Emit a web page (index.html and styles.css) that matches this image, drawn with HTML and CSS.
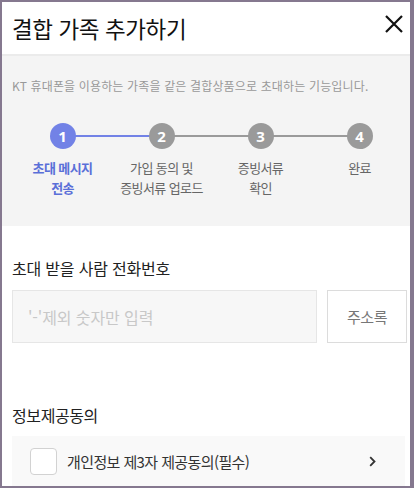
FILE: index.html
```html
<!DOCTYPE html>
<html lang="ko">
<head>
<meta charset="utf-8">
<link rel="stylesheet" href="styles.css">
</head>
<body>
<div class="frame">
  <header class="header">
    <h1 class="title">결합 가족 추가하기</h1>
    <button class="close" aria-label="닫기">
      <svg width="18" height="18" viewBox="0 0 18 18"><path d="M1 1L17 17M17 1L1 17" stroke="#111" stroke-width="2.2" fill="none"/></svg>
    </button>
  </header>
  <section class="intro">
    <p class="desc">KT 휴대폰을 이용하는 가족을 같은 결합상품으로 초대하는 기능입니다.</p>
    <ol class="steps">
      <li class="step active done"><span class="num">1</span><span class="label">초대 메시지<br>전송</span></li>
      <li class="step line"><span class="num">2</span><span class="label">가입 동의 및<br>증빙서류 업로드</span></li>
      <li class="step line"><span class="num">3</span><span class="label">증빙서류<br>확인</span></li>
      <li class="step"><span class="num">4</span><span class="label">완료</span></li>
    </ol>
  </section>
  <section class="form">
    <h2 class="field-label">초대 받을 사람 전화번호</h2>
    <div class="phone-row">
      <input class="phone-input" type="text" placeholder="'-'제외 숫자만 입력">
      <button class="book">주소록</button>
    </div>
    <h2 class="field-label agree-label">정보제공동의</h2>
    <div class="agree-row">
      <span class="check"></span>
      <span class="agree-text">개인정보 제3자 제공동의(필수)</span>
      <svg class="chev" width="7" height="11" viewBox="0 0 7 11"><path d="M1.2 1.2L5.5 5.5L1.2 9.8" stroke="#333" stroke-width="1.8" fill="none"/></svg>
    </div>
  </section>
</div>
</body>
</html>
```
FILE: styles.css
```css
* { box-sizing: border-box; margin: 0; padding: 0; }
html, body { width: 414px; height: 488px; background: #85788f; }
body {
  font-family: "Noto Sans CJK KR", "Noto Sans", sans-serif;
  color: #222;
}
.frame {
  width: 414px;
  height: 488px;
  border-style: solid;
  border-color: #85788f;
  border-width: 2px 4px 2px 2px;
  background: #fff;
  overflow: hidden;
}
.header {
  display: flex;
  align-items: center;
  justify-content: space-between;
  padding: 0 7px 0 10px;
  border-bottom: 2px solid #ebebeb;
  height: 54px;
}
.title {
  font-size: 22.5px;
  font-weight: 400;
  letter-spacing: -0.4px;
  color: #111;
  line-height: 30px;
  margin-top: -1px;
}
.close {
  border: 0;
  background: none;
  width: 18px;
  height: 18px;
  margin-top: -9px;
  display: flex;
}
.intro {
  background: #f4f4f4;
  height: 170px;
  padding: 21px 0 0 10px;
}
.desc {
  font-size: 12px;
  line-height: 18px;
  color: #999;
  letter-spacing: 0.15px;
}
.steps {
  list-style: none;
  display: grid;
  grid-template-columns: repeat(4, 99px);
  margin-top: 28px;
  margin-left: 1px;
}
.step {
  position: relative;
  display: flex;
  flex-direction: column;
  align-items: center;
}
.step.line::after,
.step.done::after {
  content: "";
  position: absolute;
  left: 50%;
  width: 99px;
  top: 12px;
  height: 2px;
  background: #9a9a9a;
  z-index: 0;
}
.step.done::after { background: #7282e6; }
.num {
  position: relative;
  z-index: 1;
  width: 26px;
  height: 26px;
  border-radius: 50%;
  background: #9a9a9a;
  color: #fff;
  font-family: "Noto Sans", sans-serif;
  font-weight: 700;
  font-size: 15px;
  line-height: 26px;
  text-align: center;
}
.step.active .num { background: #7282e6; }
.label {
  margin-top: 9px;
  font-size: 13px;
  line-height: 20px;
  letter-spacing: -0.6px;
  color: #666;
  text-align: center;
  white-space: nowrap;
}
.step.active .label { color: #5a6fd8; font-weight: 700; }
.form {
  padding: 31px 3px 0 10px;
}
.field-label {
  font-size: 16px;
  font-weight: 400;
  line-height: 22px;
  letter-spacing: -0.2px;
  color: #222;
}
.agree-label { letter-spacing: -0.4px; margin-top: 61px; }
.phone-row {
  display: flex;
  gap: 10px;
  margin-top: 11px;
}
.phone-input {
  width: 305px;
  height: 53px;
  background: #f7f7f7;
  border: 1px solid #e6e6e6;
  padding: 0 15px;
  font-family: inherit;
  font-size: 16px;
  letter-spacing: -0.1px;
  color: #333;
  outline: none;
}
.phone-input::placeholder { color: #c8c8c8; }
.book {
  width: 80px;
  height: 53px;
  background: #fff;
  border: 1px solid #dcdcdc;
  font-family: inherit;
  font-size: 15px;
  letter-spacing: -0.5px;
  color: #777;
}
.agree-row {
  margin-top: 10px;
  height: 56px;
  background: #f9f9f9;
  display: flex;
  align-items: center;
  padding: 0 0 6px 18px;
  margin-right: 2px;
}
.check {
  width: 27px;
  height: 27px;
  border: 1px solid #d2d2d2;
  border-radius: 4px;
  background: #fff;
}
.agree-text {
  margin-left: 10px;
  font-size: 15px;
  letter-spacing: -0.6px;
  color: #333;
  flex: 1;
}
.chev { margin-right: 29px; }
```
